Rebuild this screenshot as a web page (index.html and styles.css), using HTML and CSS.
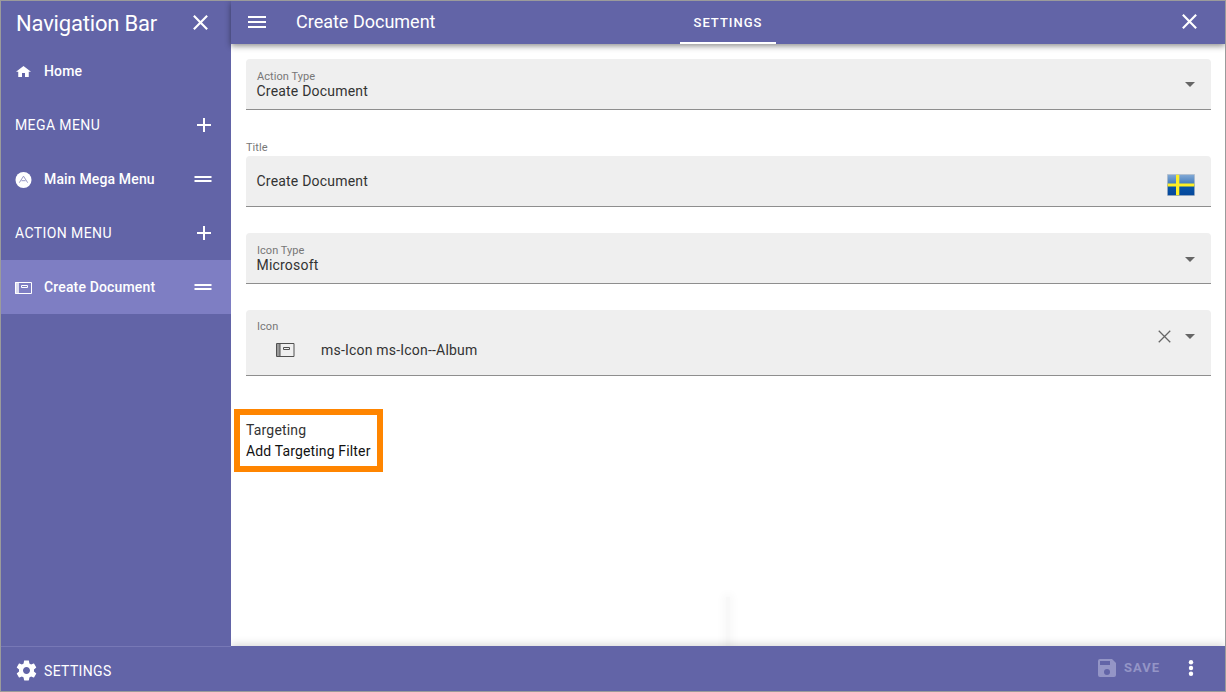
FILE: index.html
```html
<!DOCTYPE html>
<html lang="en">
<head>
<meta charset="utf-8">
<title>Navigation Bar</title>
<link rel="stylesheet" href="styles.css">
</head>
<body>
<svg width="0" height="0" class="defs">
  <symbol id="close" viewBox="0 0 14 14"><path d="M.8.8 13.2 13.2M13.2.8.8 13.2"/></symbol>
  <symbol id="plus" viewBox="0 0 14 14"><path d="M7 0v14M0 7h14"/></symbol>
  <symbol id="drag" viewBox="0 0 18 6"><path d="M.5 1h17M.5 5h17"/></symbol>
  <symbol id="arrow" viewBox="0 0 10 5"><path d="M0 0h10L5 5z"/></symbol>
</svg>
<div class="app">
  <aside class="sidebar">
    <div class="side-head"><h1>Navigation Bar</h1><svg class="line close" width="15" height="15"><use href="#close"/></svg></div>
    <nav>
      <a class="item"><svg class="lead home" width="15" height="11" viewBox="2 3 20 17" preserveAspectRatio="none"><path fill="#fff" d="M10 20v-6h4v6h5v-8h3L12 3 2 12h3v8z"/></svg><span>Home</span></a>
      <div class="item group"><span>MEGA MENU</span><svg class="line plus" width="14" height="14"><use href="#plus"/></svg></div>
      <a class="item"><svg class="lead down" width="17" height="16" viewBox="0 0 16 16"><circle cx="8" cy="8" r="8" fill="#fff"/><path d="M3.800 10.700 8 4.200l4.200 6.500M6 8.700h4" fill="none" stroke="#8c8dbd" stroke-width=".9"/></svg><span>Main Mega Menu</span><svg class="line drag" width="18" height="6"><use href="#drag"/></svg></a>
      <div class="item group"><span>ACTION MENU</span><svg class="line plus" width="14" height="14"><use href="#plus"/></svg></div>
      <a class="item active"><svg class="lead album" width="17" height="12" viewBox="0 0 17 12"><path d="M0 0h4v12H0z" fill="#fff" opacity=".75"/><path d="M.5.5h16v11H.5zM6.500 3.500h6v2h-6z" fill="none" stroke="#fff"/></svg><span>Create Document</span><svg class="line drag" width="18" height="6"><use href="#drag"/></svg></a>
    </nav>
    <div class="side-foot"><svg width="21" height="21" viewBox="1.500 1.500 21 21"><path fill="#fff" d="M19.430 12.980c.04-.32.07-.64.07-.98s-.03-.66-.07-.98l2.110-1.650c.19-.15.24-.42.12-.64l-2-3.460c-.12-.22-.39-.3-.61-.22l-2.490 1c-.52-.4-1.080-.73-1.690-.98l-.38-2.650C14.460 2.180 14.250 2 14 2h-4c-.25 0-.46.18-.49.42l-.38 2.650c-.61.25-1.170.59-1.690.98l-2.490-1c-.23-.09-.49 0-.61.22l-2 3.460c-.13.22-.07.49.12.64l2.110 1.650c-.04.32-.07.65-.07.98s.03.66.07.98l-2.110 1.650c-.19.15-.24.42-.12.64l2 3.460c.12.22.39.3.61.22l2.490-1c.52.4 1.080.73 1.690.98l.38 2.650c.03.24.24.42.49.42h4c.25 0 .46-.18.49-.42l.38-2.650c.61-.25 1.170-.59 1.690-.98l2.490 1c.23.09.49 0 .61-.22l2-3.460c.12-.22.07-.49-.12-.64zM12 15.500c-1.930 0-3.500-1.570-3.500-3.500s1.570-3.500 3.500-3.500 3.500 1.570 3.500 3.500-1.570 3.500-3.500 3.500z"/></svg><span>SETTINGS</span></div>
  </aside>
  <section class="panel">
    <header class="topbar">
      <div class="top-left"><svg width="18" height="12" viewBox="0 0 18 12"><path d="M0 1h18M0 6h18M0 11h18" stroke="#fff" stroke-width="2"/></svg><h2>Create Document</h2></div>
      <div class="tab">SETTINGS</div>
      <div class="top-right"><svg class="line close" width="15" height="15"><use href="#close"/></svg></div>
    </header>
    <main class="content">
      <div class="field"><div class="grow"><label>Action Type</label><div class="value">Create Document</div></div><svg class="arrow" width="10" height="5"><use href="#arrow"/></svg></div>
      <label class="outer-label">Title</label>
      <div class="field input"><div class="value grow">Create Document</div>
        <svg class="flag" width="28" height="22" viewBox="0 0 28 22"><defs><linearGradient id="blue" x2="0" y2="1"><stop offset="0" stop-color="#82a9d5"/><stop offset=".48" stop-color="#3e79bb"/><stop offset=".5" stop-color="#0956a8"/><stop offset="1" stop-color="#05489c"/></linearGradient></defs><path fill="#c7cbd0" d="M0 0h28v22H0z"/><path fill="url(#blue)" d="M.7.7h26.600v20.600H.7z"/><path fill="#ffef24" d="M9 .7h3.300v20.600H9zM.7 9.500h26.600v3H.7z"/></svg>
      </div>
      <div class="field type"><div class="grow"><label>Icon Type</label><div class="value">Microsoft</div></div><svg class="arrow" width="10" height="5"><use href="#arrow"/></svg></div>
      <div class="field icon-field"><div class="grow"><label>Icon</label><div class="chosen"><svg width="19" height="14" viewBox="0 0 19 14"><path d="M1 1h3v12H1z" fill="#999"/><path d="M.5.500h17.500v13H.5zM4 1v12M7.500 4.500h6v2h-6z" fill="none" stroke="#505050"/></svg><span>ms-Icon ms-Icon--Album</span></div></div><svg class="clear" width="13" height="13"><use href="#close"/></svg><svg class="arrow" width="10" height="5"><use href="#arrow"/></svg></div>
      <div class="targeting"><div>Targeting</div><a>Add Targeting Filter</a></div>
      <div class="ghost"></div>
    </main>
    <footer class="bottombar">
      <svg width="18" height="18" viewBox="3 3 18 18"><path fill="currentColor" d="M17 3H5a2 2 0 0 0-2 2v14a2 2 0 0 0 2 2h14a2 2 0 0 0 2-2V7l-4-4zm-5 16a3 3 0 1 1 0-6 3 3 0 0 1 0 6zm3-10H5V5h10v4z"/></svg>
      <span>SAVE</span>
      <svg class="more" width="6" height="16" viewBox="0 0 6 16"><g fill="#fff"><circle cx="3" cy="2.200" r="2.200"/><circle cx="3" cy="8" r="2.200"/><circle cx="3" cy="13.800" r="2.200"/></g></svg>
    </footer>
  </section>
</div>
</body>
</html>
```
FILE: styles.css
```css
* { box-sizing: border-box; }
body { margin: 0; font: 14px/20px Roboto, sans-serif; color: #333; }
.defs { display: block; position: absolute; }
.app { display: flex; width: 1226px; height: 692px; border: 1px solid #9b9b9b; background: #fff; overflow: hidden; }
svg { flex: none; display: block; }
h1, h2 { margin: 0; font-weight: 400; color: #fff; }
h1 { font-size: 22px; line-height: 28px; letter-spacing: -.18px; }
h2 { font-size: 18px; line-height: 24px; }
.line { fill: none; stroke: #fff; stroke-width: 2; }
.sidebar { width: 230px; flex: none; display: flex; flex-direction: column; background: #6264a7; color: #fff; }
.side-head { height: 43px; display: flex; align-items: center; justify-content: space-between; padding: 2px 23px 0 15px; }
.side-head .close { margin-bottom: 3px; }
nav { flex: 1; }
.item { height: 54px; display: flex; align-items: center; padding: 0 19px 0 14px; font-weight: 500; letter-spacing: .15px; }
.item span { flex: 1; }
.lead { margin-right: 12px; }
.home { margin-left: 1px; margin-right: 13px; }
.down { margin-top: 2px; }
.album { margin-top: 2px; }
.group { font-weight: 400; letter-spacing: .4px; }
.plus { margin-right: 1px; margin-left: auto; }
.active { background: #7e7ec3; }
.side-foot { height: 45px; border-top: 1px solid #7778b6; display: flex; align-items: center; padding: 4px 0 1px 15px; gap: 7px; letter-spacing: .35px; }
.panel { flex: 1; display: flex; flex-direction: column; }
.topbar { height: 43px; display: grid; grid-template-columns: 449px 96px 1fr; background: #6264a7; box-shadow: 0 2px 6px rgba(0,0,0,.45); z-index: 1; }
.top-left { display: flex; align-items: center; padding: 0 0 2px 17px; gap: 30px; }
.tab { color: #fff; font-size: 13px; font-weight: 500; letter-spacing: 1px; padding-top: 2px; line-height: 39px; text-align: center; border-bottom: 2px solid #fff; }
.top-right { display: flex; align-items: center; justify-content: flex-end; padding: 0 28px 2px 0; }
.content { flex: 1; padding: 15px 14px 0 15px; overflow: hidden; }
.field { height: 51px; background: #efefef; border-bottom: 1px solid #8e8e8e; border-radius: 4px 4px 0 0; display: flex; align-items: center; padding: 0 16.5px 0 10.500px; letter-spacing: .2px; }
.grow { flex: 1; }
label { display: block; font-size: 11px; line-height: 14px; color: #777; letter-spacing: .05px; }
.field label { padding-left: .5px; }
.field label + .value { line-height: 16px; margin-top: -1px; }
.field label:has(+ .value) { padding-top: 1px; }
.arrow { fill: #666; }
.outer-label { margin-top: 31px; margin-bottom: 1px; }
.flag { margin: 8px -.5px 0 0; }
.type { margin-top: 26px; }
.type .arrow { margin-top: 2px; }
.icon-field { height: 66px; margin-top: 26px; }
.chosen { display: flex; align-items: center; gap: 26px; padding: 0 0 0 19.5px; height: 31px; }
.clear { fill: none; stroke: #666; stroke-width: 1.4; margin: 0 13.5px 13px 0; }
.icon-field .arrow { margin-bottom: 13px; }
.targeting { width: 149px; height: 63px; margin: 33px 0 0 -12px; border: 6px solid #ff8500; padding: 5px 0 0 6px; line-height: 21px; letter-spacing: .18px; }
.targeting a { color: #111; letter-spacing: .15px; }
.ghost { width: 4px; height: 54px; margin: 125px 0 0 480px; background: #f8f8f8; box-shadow: 0 0 8px 3px rgba(0,0,0,.03); }
.bottombar { height: 45px; display: flex; align-items: center; justify-content: flex-end; padding: 0 31px 1px 0; background: #6264a7; color: #9495c6; font-size: 13px; font-weight: 700; letter-spacing: 1px; box-shadow: 0 -2px 8px rgba(0,0,0,.15); clip-path: inset(-12px 0 0 0); z-index: 1; }
.bottombar span { margin-left: 8px; }
.more { margin-left: 28px; }
```
